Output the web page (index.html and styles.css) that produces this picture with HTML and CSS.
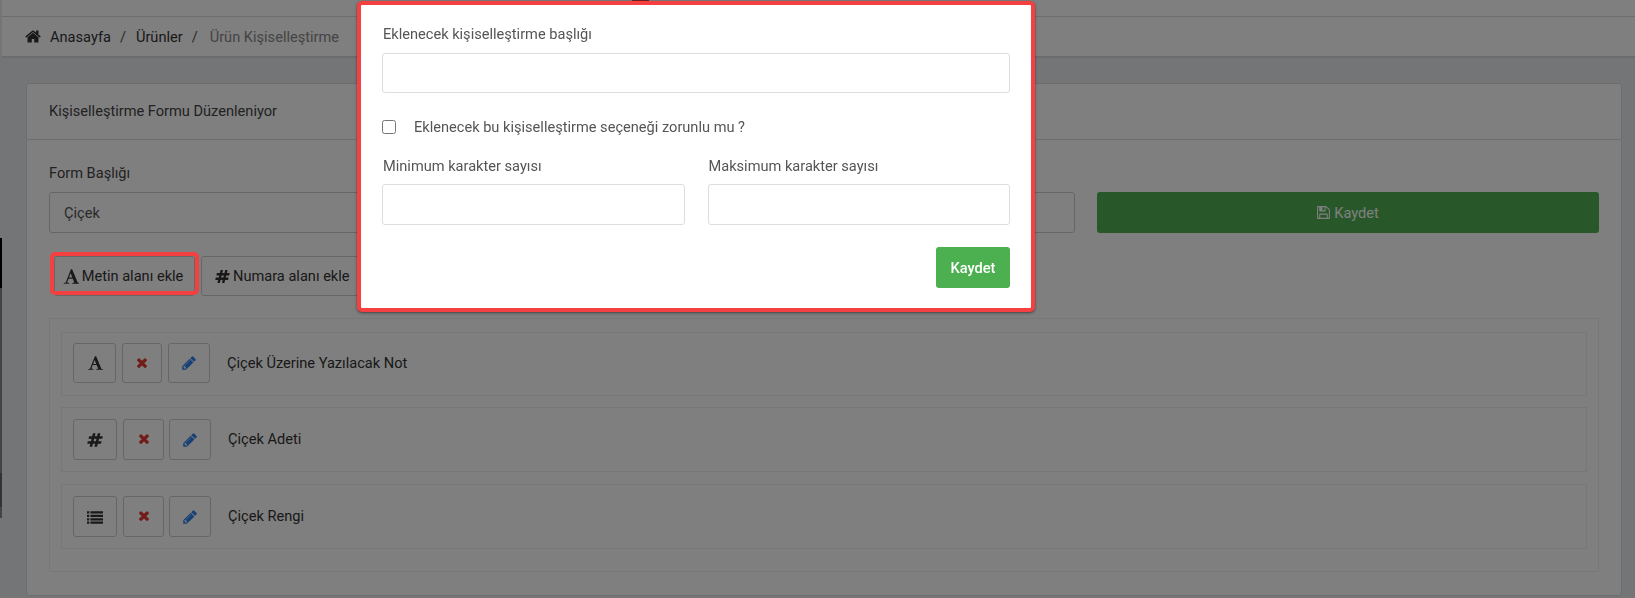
FILE: index.html
```html
<!DOCTYPE html>
<html lang="tr">
<head>
<meta charset="utf-8">
<title>Ürün Kişiselleştirme</title>
<link rel="stylesheet" href="styles.css">
</head>
<body>
<svg class="defs" width="0" height="0" aria-hidden="true">
  <symbol id="i-font" viewBox="0 0 1664 1792"><path d="M789 559l-170 450q33 0 136.500 2t160.500 2q19 0 57-2-87-253-184-452zm-725 1105l2-79q23-7 56-12.500t57-10.500 49.500-14.500 44.500-29 31-50.500l237-616 280-724h128q8 14 11 21l205 480q33 78 106 257.500t114 274.500q15 34 58 144.500t72 168.500q20 45 35 57 19 15 88 29.500t84 20.500q6 38 6 57 0 5-.5 13.500t-.5 12.500q-63 0-190-8t-191-8q-76 0-215 7t-178 8q0-43 4-78l131-28q1 0 12.500-2.500t15.500-3.500 14.500-4.500 15-6.500 11-8 9-11 2.500-14q0-16-31-96.500t-72-177.500-42-100l-450-2q-26 58-76.500 195.500t-50.500 162.500q0 22 14 37.500t43.500 24.500 49.500 13.500 58 8.500 43 4q1 19 1 58 0 9-2 27-58 0-174.500-10t-174.500-10q-8 0-26.500 4t-21.500 4q-80 14-188 14z"/></symbol>
  <symbol id="i-hash" viewBox="0 0 1792 1792"><path d="M991 1024l64-256h-254l-64 256h254zm768-504l-56 224q-7 24-31 24h-327l-64 256h311q15 0 25 12 10 14 6 28l-56 224q-5 24-31 24h-327l-81 328q-7 24-31 24h-224q-16 0-26-12-9-12-6-28l78-312h-254l-81 328q-7 24-31 24h-225q-15 0-25-12-9-12-6-28l78-312h-311q-15 0-25-12-9-12-6-28l56-224q7-24 31-24h327l64-256h-311q-15 0-25-12-10-14-6-28l56-224q5-24 31-24h327l81-328q7-24 32-24h224q15 0 25 12 9 12 6 28l-78 312h254l81-328q7-24 32-24h224q15 0 25 12 9 12 6 28l-78 312h311q15 0 25 12 9 12 6 28z"/></symbol>
  <symbol id="i-list" viewBox="0 0 1792 1792"><path d="M0 256h256v256h-256zM384 256h1408v256h-1408zM0 640h256v256h-256zM384 640h1408v256h-1408zM0 1024h256v256h-256zM384 1024h1408v256h-1408zM0 1408h256v256h-256zM384 1408h1408v256h-1408z"/></symbol>
  <symbol id="i-times" viewBox="0 0 1408 1792"><path d="M1298 1214q0 40-28 68l-136 136q-28 28-68 28t-68-28l-294-294-294 294q-28 28-68 28t-68-28l-136-136q-28-28-28-68t28-68l294-294-294-294q-28-28-28-68t28-68l136-136q28-28 68-28t68 28l294 294 294-294q28-28 68-28t68 28l136 136q28 28 28 68t-28 68l-294 294 294 294q28 28 28 68z"/></symbol>
  <symbol id="i-pencil" viewBox="0 0 1515 1792"><path d="M363 1536l91-91-235-235-91 91v107h128v128h107zm523-928q0-22-22-22-10 0-17 7l-542 542q-7 7-7 17 0 22 22 22 10 0 17-7l542-542q7-7 7-17zm-54-192l416 416-832 832h-416v-416zm683 96q0 53-37 90l-166 165-416-416 165-166q36-38 90-38 53 0 91 38l235 234q38 39 38 91z"/></symbol>
  <symbol id="i-home" viewBox="0 0 1664 1792"><path d="M1408 992v480q0 26-19 45t-45 19h-384v-384h-256v384h-384q-26 0-45-19t-19-45v-480q0-1 .5-3t.5-3l575-474 575 474q1 2 1 6zm223-69l-62 74q-8 9-21 11h-3q-13 0-21-7l-692-577-692 577q-12 8-24 7-13-2-21-11l-62-74q-8-10-7-23.500t11-21.500l719-599q32-26 76-26t76 26l244 204v-195q0-14 9-23t23-9h192q14 0 23 9t9 23v408l219 182q10 8 11 21.500t-7 23.500z"/></symbol>
  <symbol id="i-save" viewBox="0 0 1536 1792"><path d="M384 1536h768v-384h-768v384zm896 0h128v-896q0-14-10-38.500t-20-34.500l-281-281q-10-10-34-20t-39-10v416q0 40-28 68t-68 28h-576q-40 0-68-28t-28-68v-416h-128v1280h128v-416q0-40 28-68t68-28h832q40 0 68 28t28 68v416zm-384-928v-320q0-13-9.500-22.500t-22.500-9.500h-192q-13 0-22.500 9.500t-9.500 22.500v320q0 13 9.500 22.500t22.500 9.500h192q13 0 22.500-9.500t9.500-22.500zm640 32v928q0 40-28 68t-68 28h-1344q-40 0-68-28t-28-68v-1344q0-40 28-68t68-28h928q40 0 88 20t76 48l280 280q28 28 48 76t20 88z"/></symbol>
</svg>

<div class="page">
  <div class="side-edge"></div>
  <div class="main">
    <div class="topbar"></div>
    <nav class="crumbs">
      <svg class="ico ico-home"><use href="#i-home"/></svg>
      <a class="crumb">Anasayfa</a>
      <span class="sep">/</span>
      <a class="crumb">Ürünler</a>
      <span class="sep">/</span>
      <span class="crumb current">Ürün Kişiselleştirme</span>
    </nav>
    <div class="content">
      <section class="card">
        <header class="card-head">Kişiselleştirme Formu Düzenleniyor</header>
        <div class="card-body">
          <div class="title-row">
            <div class="title-field">
              <label class="field-label">Form Başlığı</label>
              <input class="field" type="text" value="Çiçek">
            </div>
            <button class="save-main" type="button"><svg class="ico ico-save"><use href="#i-save"/></svg> Kaydet</button>
          </div>
          <div class="add-row">
            <button class="btn add-text" type="button"><svg class="ico ico-add-font"><use href="#i-font"/></svg> Metin alanı ekle</button>
            <button class="btn add-num" type="button"><svg class="ico ico-add-hash"><use href="#i-hash"/></svg> Numara alanı ekle</button>
          </div>
          <div class="items">
            <div class="item item-a">
              <button class="btn sq sq-type" type="button"><svg class="ico ico-type-font"><use href="#i-font"/></svg></button>
              <button class="btn sq sq-del" type="button"><svg class="ico ico-del"><use href="#i-times"/></svg></button>
              <button class="btn sq sq-edit" type="button"><svg class="ico ico-edit"><use href="#i-pencil"/></svg></button>
              <span class="item-name">Çiçek Üzerine Yazılacak Not</span>
            </div>
            <div class="item item-b">
              <button class="btn sq sq-type" type="button"><svg class="ico ico-type-hash"><use href="#i-hash"/></svg></button>
              <button class="btn sq sq-del" type="button"><svg class="ico ico-del"><use href="#i-times"/></svg></button>
              <button class="btn sq sq-edit" type="button"><svg class="ico ico-edit"><use href="#i-pencil"/></svg></button>
              <span class="item-name">Çiçek Adeti</span>
            </div>
            <div class="item item-c">
              <button class="btn sq sq-type" type="button"><svg class="ico ico-type-list"><use href="#i-list"/></svg></button>
              <button class="btn sq sq-del" type="button"><svg class="ico ico-del"><use href="#i-times"/></svg></button>
              <button class="btn sq sq-edit" type="button"><svg class="ico ico-edit"><use href="#i-pencil"/></svg></button>
              <span class="item-name">Çiçek Rengi</span>
            </div>
          </div>
        </div>
      </section>
    </div>
  </div>
</div>

<div class="backdrop"></div>
<div class="focus-ring"></div>
<div class="top-tip"></div>

<div class="modal">
  <label class="m-label">Eklenecek kişiselleştirme başlığı</label>
  <input class="m-field" type="text">
  <div class="m-check">
    <input class="m-box" type="checkbox">
    <span>Eklenecek bu kişiselleştirme seçeneği zorunlu mu ?</span>
  </div>
  <div class="m-cols">
    <div class="m-col">
      <label class="m-label">Minimum karakter sayısı</label>
      <input class="m-field" type="text">
    </div>
    <div class="m-col">
      <label class="m-label">Maksimum karakter sayısı</label>
      <input class="m-field" type="text">
    </div>
  </div>
  <div class="m-actions"><button class="m-save" type="button">Kaydet</button></div>
</div>
</body>
</html>
```
FILE: styles.css
```css
* { box-sizing: border-box; }
html, body { margin: 0; padding: 0; height: 100%; overflow: hidden; }
body { font-family: Roboto, "Liberation Sans", sans-serif; font-size: 14.6px; color: #333; background: #e9ebee; }
.defs { position: absolute; }
.ico { display: block; fill: currentColor; flex: none; }

.page { display: flex; height: 598px; }
.side-edge { width: 2px; flex: none; background: linear-gradient(#e9ebee 0 238px, #000 238px 288px, #888 288px 473px, #666 473px 507px, #888 507px 518px, #e9ebee 518px); }
.main { flex: 1; min-width: 0; }
.topbar { height: 17px; background: #fff; border-bottom: 1px solid #ddd; }
.crumbs { height: 41px; background: #fff; border-bottom: 2px solid #d8d8d8; display: flex; align-items: center; padding: 0 0 0 23px; color: #333; }
.ico-home { width: 16px; height: 17px; margin-right: 9px; }
.crumb { line-height: 20px; }
.sep { margin: 0 10px 0 9px; color: #555; }
.current { color: #888; margin-left: 2px; }

.content { padding: 25px 13px 0 24px; }
.card { background: #fff; border: 1px solid #ddd; border-radius: 3px; height: 513px; }
.card-head { height: 56px; border-bottom: 1px solid #ddd; display: flex; align-items: center; padding: 0 22px 2px; color: #444; }
.card-body { padding: 23px 22px 0; }

.title-row { display: flex; align-items: flex-end; gap: 22px; }
.title-field { width: 1026px; flex: none; }
.field-label { display: block; line-height: 20px; margin-bottom: 9px; color: #444; }
.field { display: block; width: 100%; height: 41px; border: 1px solid #ccc; border-radius: 3px; padding: 0 14px; font: 14.6px Roboto, sans-serif; color: #555; background: #fff; }
.save-main { width: 502px; flex: none; height: 41px; border: 0; border-radius: 3px; background: #50b052; color: #fff; font: 14.6px Roboto, sans-serif; display: flex; align-items: center; justify-content: center; gap: 4px; }
.ico-save { width: 13px; height: 15px; }

.add-row { display: flex; gap: 6px; margin: 23px 0 0 5px; }
.btn { background: #fff; border: 1px solid #ccc; border-radius: 3px; color: #333; font: 14.6px Roboto, sans-serif; display: flex; align-items: center; justify-content: center; padding: 0; }
.add-text { width: 141px; height: 40px; gap: 3px; padding-right: 3px; }
.add-num { padding: 0 14px 0 13px; height: 40px; gap: 3px; }
.ico-add-font { width: 16px; height: 17px; }
.ico-add-hash { width: 15px; height: 15px; }

.items { margin-top: 22px; border: 1px solid #eee; border-radius: 3px; padding: 13px 11px 22px; height: 254px; }
.item { display: flex; align-items: flex-start; border: 1px solid #eee; padding: 11px 11px 0; height: 65px; gap: 6px; margin-bottom: 12px; }
.item-a { height: 64px; margin-bottom: 11px; padding-top: 10px; }
.item-c { margin-bottom: 0; }
.sq { height: 40px; width: 40px; flex: none; }
.sq-type { width: 43px; }
.sq-edit { width: 42px; }
.item-b .sq, .item-c .sq { height: 41px; }
.item-b .sq-del, .item-c .sq-del { width: 41px; }
.item-b .sq-type, .item-c .sq-type { width: 44px; }
.item-b .sq-edit, .item-c .sq-edit { margin-left: -1px; }
.item-name { margin-left: 11px; color: #333; line-height: 40px; }
.ico-type-font, .ico-type-hash { width: 16px; height: 16px; }
.ico-type-list { width: 16px; height: 16px; }
.ico-del { width: 12px; height: 15px; color: #e53935; }
.ico-edit { width: 14px; height: 16px; color: #2f80e8; }

.backdrop { position: fixed; inset: 0; background: rgba(0, 0, 0, .5); }
.focus-ring { position: fixed; left: 50px; top: 252px; width: 149px; height: 43px; border: 4px solid #f44040; border-radius: 5px; }
.top-tip { position: fixed; left: 632px; top: 0; width: 17px; height: 1px; background: #7a2020; }

.modal { position: fixed; left: 357px; top: 1px; width: 678px; height: 311px; background: #fff; border: 4px solid #f44040; border-radius: 5px; box-shadow: 0 1px 3px rgba(0,0,0,.5); padding: 19px 21px 0; }
.m-label { display: block; line-height: 20px; color: #555; margin-bottom: 9px; padding-left: 1px; }
.m-col .m-label { margin-bottom: 8px; }
.m-field { display: block; width: 100%; height: 40px; border: 1px solid #ddd; border-radius: 3px; background: #fff; }
.m-check { display: flex; align-items: center; margin-top: 24px; height: 20px; color: #555; }
.m-box { margin: 0 18px 0 0; width: 14px; height: 14px; }
.m-cols { display: flex; gap: 23px; margin-top: 19px; }
.m-col { flex: 1; min-width: 0; }
.m-col .m-field { height: 41px; }
.m-actions { display: flex; justify-content: flex-end; margin-top: 22px; }
.m-save { width: 74px; height: 41px; border: 0; border-radius: 3px; background: #4caf50; color: #fff; font: 500 14.6px Roboto, sans-serif; }
```
